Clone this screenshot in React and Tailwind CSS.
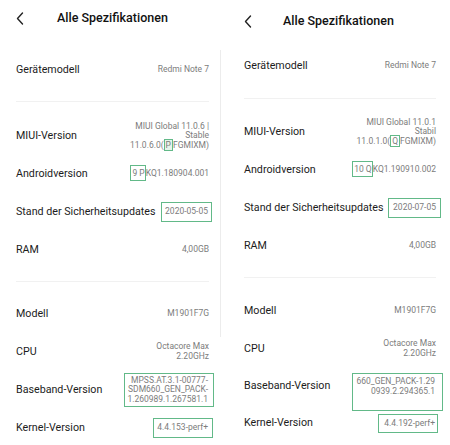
// App.jsx
// Two MIUI "Alle Spezifikationen" screens side by side

const GREEN = 'border border-[#62b988]';

function Back() {
  return (
    <svg width="8" height="13" viewBox="0 0 8 13" className="shrink-0">
      <path d="M6.5 1 L1.5 6.5 L6.5 12" fill="none" stroke="#222" strokeWidth="1.4" strokeLinecap="round" strokeLinejoin="round" />
    </svg>
  );
}

function Row({ label, h = 'h-[38px]', children }) {
  return (
    <div className={`flex items-center justify-between ${h}`}>
      <span className="text-[10.7px] text-[#1c1c1c] whitespace-nowrap">{label}</span>
      <div className="text-right text-[8.5px] leading-[9.6px] text-[#7c7c7c] whitespace-nowrap">{children}</div>
    </div>
  );
}

function Divider({ h, top }) {
  return (
    <div className={`${h} ${top}`}>
      <div className="h-px bg-[#f1f1f1]" />
    </div>
  );
}

function LeftScreen() {
  return (
    <div className="relative w-[222px] shrink-0 pl-[16px] pr-[13px]">
      <div className="absolute left-[220px] top-[50px] h-[287px] w-px bg-[#ececec]" />
      <div className="h-[36px] flex items-center">
        <Back />
        <span className="ml-[33px] text-[12.5px] font-medium text-[#111]">Alle Spezifikationen</span>
      </div>
      <div className="h-[15px]" />
      <Row label="Gerätemodell">Redmi Note 7</Row>
      <Divider h="h-[28px]" top="pt-[12px]" />
      <Row label="MIUI-Version">
        <div>MIUI Global 11.0.6 |</div>
        <div>Stable</div>
        <div>11.0.6.0(<span className={`${GREEN} bg-[#e6f4ea] px-[1px]`}>P</span>FGMIXM)</div>
      </Row>
      <Row label="Androidversion">
        <span className={`${GREEN} py-[2px] pl-[1px] pr-[0px]`}>9 P</span>KQ1.180904.001
      </Row>
      <Row label="Stand der Sicherheitsupdates">
        <span className={`${GREEN} inline-block -mr-[3px] px-[3px] py-[4px]`}>2020-05-05</span>
      </Row>
      <Row label="RAM">4,00GB</Row>
      <Divider h="h-[26px]" top="pt-[12px]" />
      <Row label="Modell">M1901F7G</Row>
      <Row label="CPU">
        <div>Octacore Max</div>
        <div>2.20GHz</div>
      </Row>
      <Row label="Baseband-Version">
        <div className={`${GREEN} inline-block -mr-[5px] pl-[2px] pr-[5px] py-[2px]`}>
          <div>MPSS.AT.3.1-00777-</div>
          <div>SDM660_GEN_PACK-</div>
          <div>1.260989.1.267581.1</div>
        </div>
      </Row>
      <Row label="Kernel-Version">
        <span className={`${GREEN} inline-block -mr-[4px] pl-[3px] pr-[4px] py-[4px]`}>4.4.153-perf+</span>
      </Row>
    </div>
  );
}

function RightScreen() {
  return (
    <div className="flex-1 pl-[22px] pr-[14px]">
      <div className="h-[43px] flex items-center">
        <Back />
        <span className="ml-[31px] text-[12.5px] font-medium text-[#111]">Alle Spezifikationen</span>
      </div>
      <div className="h-[4px]" />
      <Row label="Gerätemodell">Redmi Note 7</Row>
      <Divider h="h-[28px]" top="pt-[13px]" />
      <Row label="MIUI-Version">
        <div>MIUI Global 11.0.1</div>
        <div>Stabil</div>
        <div>11.0.1.0(<span className={`${GREEN} px-[1px]`}>Q</span>FGMIXM)</div>
      </Row>
      <Row label="Androidversion">
        <span className={`${GREEN} py-[2px] pl-[1px]`}>10 Q</span>KQ1.190910.002
      </Row>
      <Row label="Stand der Sicherheitsupdates">
        <span className={`${GREEN} inline-block -mr-[5px] px-[4px] py-[4px]`}>2020-07-05</span>
      </Row>
      <Row label="RAM">4,00GB</Row>
      <Divider h="h-[27px]" top="pt-[12px]" />
      <Row label="Modell">M1901F7G</Row>
      <Row label="CPU">
        <div>Octacore Max</div>
        <div>2.20GHz</div>
      </Row>
      <Row label="Baseband-Version" h="h-[37px]">
        <div className={`${GREEN} inline-block -mr-[7px] pl-[4px] pr-[7px] pt-[3px] pb-[13px] mt-[11px]`}>
          <div>660_GEN_PACK-1.29</div>
          <div>0939.2.294365.1</div>
        </div>
      </Row>
      <Row label="Kernel-Version" h="h-[37px]">
        <span className={`${GREEN} inline-block -mr-[2px] pl-[5px] pr-[2px] py-[4px]`}>4.4.192-perf+</span>
      </Row>
    </div>
  );
}

export default function App() {
  return (
    <div className="w-[450px] h-[445px] overflow-hidden bg-white flex font-['Roboto',sans-serif]">
      <LeftScreen />
      <RightScreen />
    </div>
  );
}
